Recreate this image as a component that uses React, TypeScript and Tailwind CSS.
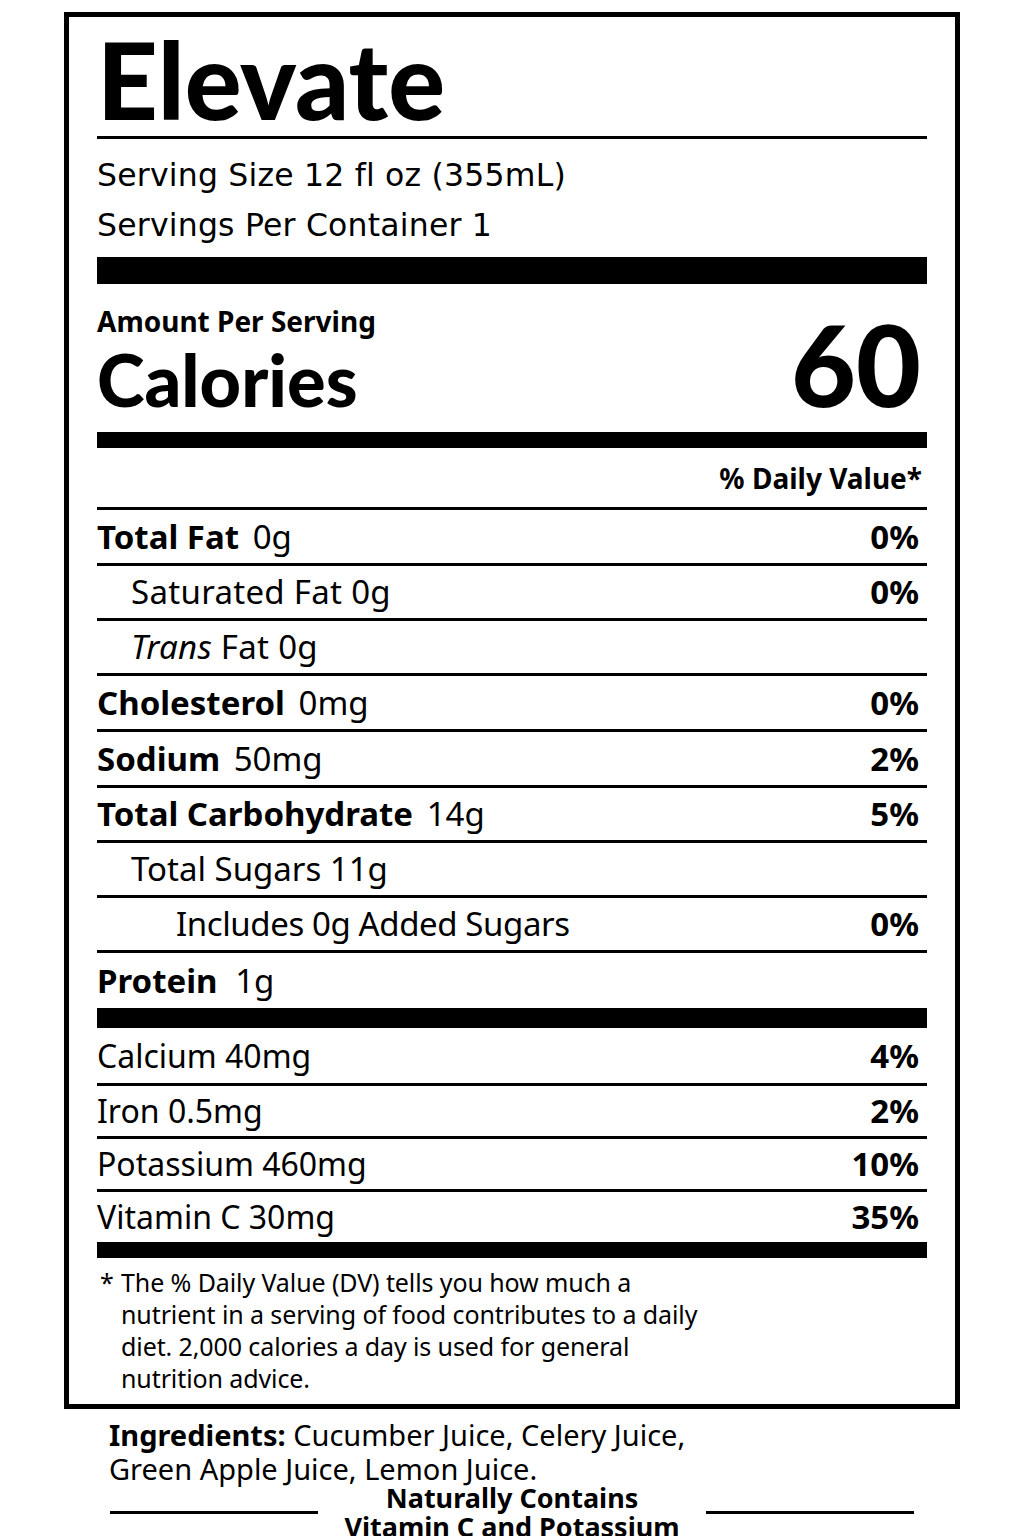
import React from "react";

type R = {
  label: React.ReactNode;
  amount?: string;
  dv?: string;
  indent?: string;
  h: string;
};

const B = ({ children, extra }: { children: React.ReactNode; extra?: string }) => (
  <b className={`font-bold ${extra ?? "mr-[5px]"}`}>{children}</b>
);

const rows: R[] = [
  { label: <B>Total Fat</B>, amount: "0g", dv: "0%", h: "h-[56px]" },
  { label: "Saturated Fat", amount: "0g", dv: "0%", indent: "pl-[34px] tracking-[0.3px]", h: "h-[55px]" },
  { label: <><i>Trans</i> Fat</>, amount: "0g", indent: "pl-[34px] tracking-[0.3px]", h: "h-[55px]" },
  { label: <B>Cholesterol</B>, amount: "0mg", dv: "0%", h: "h-[56px]" },
  { label: <B>Sodium</B>, amount: "50mg", dv: "2%", h: "h-[56px]" },
  { label: <B>Total Carbohydrate</B>, amount: "14g", dv: "5%", h: "h-[55px]" },
  { label: "Total Sugars", amount: "11g", indent: "pl-[34px]", h: "h-[55px]" },
  { label: "Includes 0g Added Sugars", dv: "0%", indent: "pl-[79px] tracking-[-0.4px]", h: "h-[55px]" },
  { label: <B extra="mr-[9px]">Protein</B>, amount: "1g", h: "h-[58px]" },
];

const vits = [
  { label: "Calcium 40mg", dv: "4%", first: true },
  { label: "Iron 0.5mg", dv: "2%" },
  { label: "Potassium 460mg", dv: "10%" },
  { label: "Vitamin C 30mg", dv: "35%" },
];

export default function App() {
  return (
    <div className="w-[1024px] h-[1536px] overflow-hidden bg-white text-black">
      <div className="ml-[64px] mt-[12px] w-[896px] border-[5px] border-black px-[28px]">
        {/* Title */}
        <div className="h-[119px] pt-[9px]">
          <div className="font-['Lato',sans-serif] font-black text-[106px] leading-none">
            Elevate
          </div>
        </div>
        <div className="h-[3px] bg-black" />
        {/* Serving */}
        <div className="h-[118px] pt-[11px] font-['DejaVu_Sans',sans-serif] text-[31.5px] tracking-[0.2px] leading-[50px]">
          <div>Serving Size 12 fl oz (355mL)</div>
          <div>Servings Per Container 1</div>
        </div>
        <div className="h-[27px] bg-black" />
        {/* Calories */}
        <div className="h-[148px] pt-[21px]">
          <div className="font-['Noto_Sans',sans-serif] font-bold text-[28px] leading-[32px]">
            Amount Per Serving
          </div>
          <div className="mt-[-9px] flex items-baseline justify-between h-[72px]">
            <div className="font-['Lato',sans-serif] font-black text-[72px] leading-[72px]">Calories</div>
            <div className="font-['Lato',sans-serif] font-black text-[112px] leading-[72px] pr-[6px]">60</div>
          </div>
        </div>
        <div className="h-[16px] bg-black" />
        <div className="h-[59px] flex items-center justify-end pr-[5px] font-['Noto_Sans',sans-serif] font-bold text-[28px]">
          % Daily Value*
        </div>
        {/* Nutrient rows */}
        <div className="font-['Noto_Sans',sans-serif] text-[33px]">
          {rows.map((r, i) => (
            <div
              key={i}
              className={`${r.h} border-t-[3px] border-black flex items-center justify-between pr-[8px]`}
            >
              <div className={`${r.indent ?? ""} whitespace-pre`}>
                {r.label}
                {r.amount ? " " + r.amount : ""}
              </div>
              {r.dv && <div className="font-bold">{r.dv}</div>}
            </div>
          ))}
        </div>
        <div className="h-[20px] bg-black" />
        <div className="font-['Noto_Sans',sans-serif] text-[32px]">
          {vits.map((v, i) => (
            <div
              key={i}
              className={
                v.first
                  ? "h-[55px] flex items-center justify-between pr-[8px]"
                  : "h-[53px] border-t-[3px] border-black flex items-center justify-between pr-[8px]"
              }
            >
              <div>{v.label}</div>
              <div className="font-bold text-[33px]">{v.dv}</div>
            </div>
          ))}
        </div>
        <div className="h-[16px] bg-black" />
        {/* Footnote */}
        <div className="pt-[8px] pb-[10px] flex font-['Noto_Sans',sans-serif] text-[25px] leading-[32px]">
          <div className="w-[24px] pl-[3px]">*</div>
          <div className="tracking-[-0.1px]">
            <div>The % Daily Value (DV) tells you how much a</div>
            <div>nutrient in a serving of food contributes to a daily</div>
            <div>diet. 2,000 calories a day is used for general</div>
            <div>nutrition advice.</div>
          </div>
        </div>
      </div>
      {/* Ingredients */}
      <div className="ml-[109px] mt-[9px] font-['Noto_Sans',sans-serif] text-[29px] leading-[34px]">
        <div>
          <b className="font-bold">Ingredients:</b> Cucumber Juice, Celery Juice,
        </div>
        <div>Green Apple Juice, Lemon Juice.</div>
      </div>
      <div className="ml-[110px] mt-[-3px] w-[804px] flex items-center font-['Noto_Sans',sans-serif] font-bold text-[27px] leading-[29px]">
        <div className="flex-1 h-[3px] bg-black" />
        <div className="px-[26px] text-center whitespace-nowrap">
          <div>Naturally Contains</div>
          <div>Vitamin C and Potassium</div>
        </div>
        <div className="flex-1 h-[3px] bg-black" />
      </div>
    </div>
  );
}
